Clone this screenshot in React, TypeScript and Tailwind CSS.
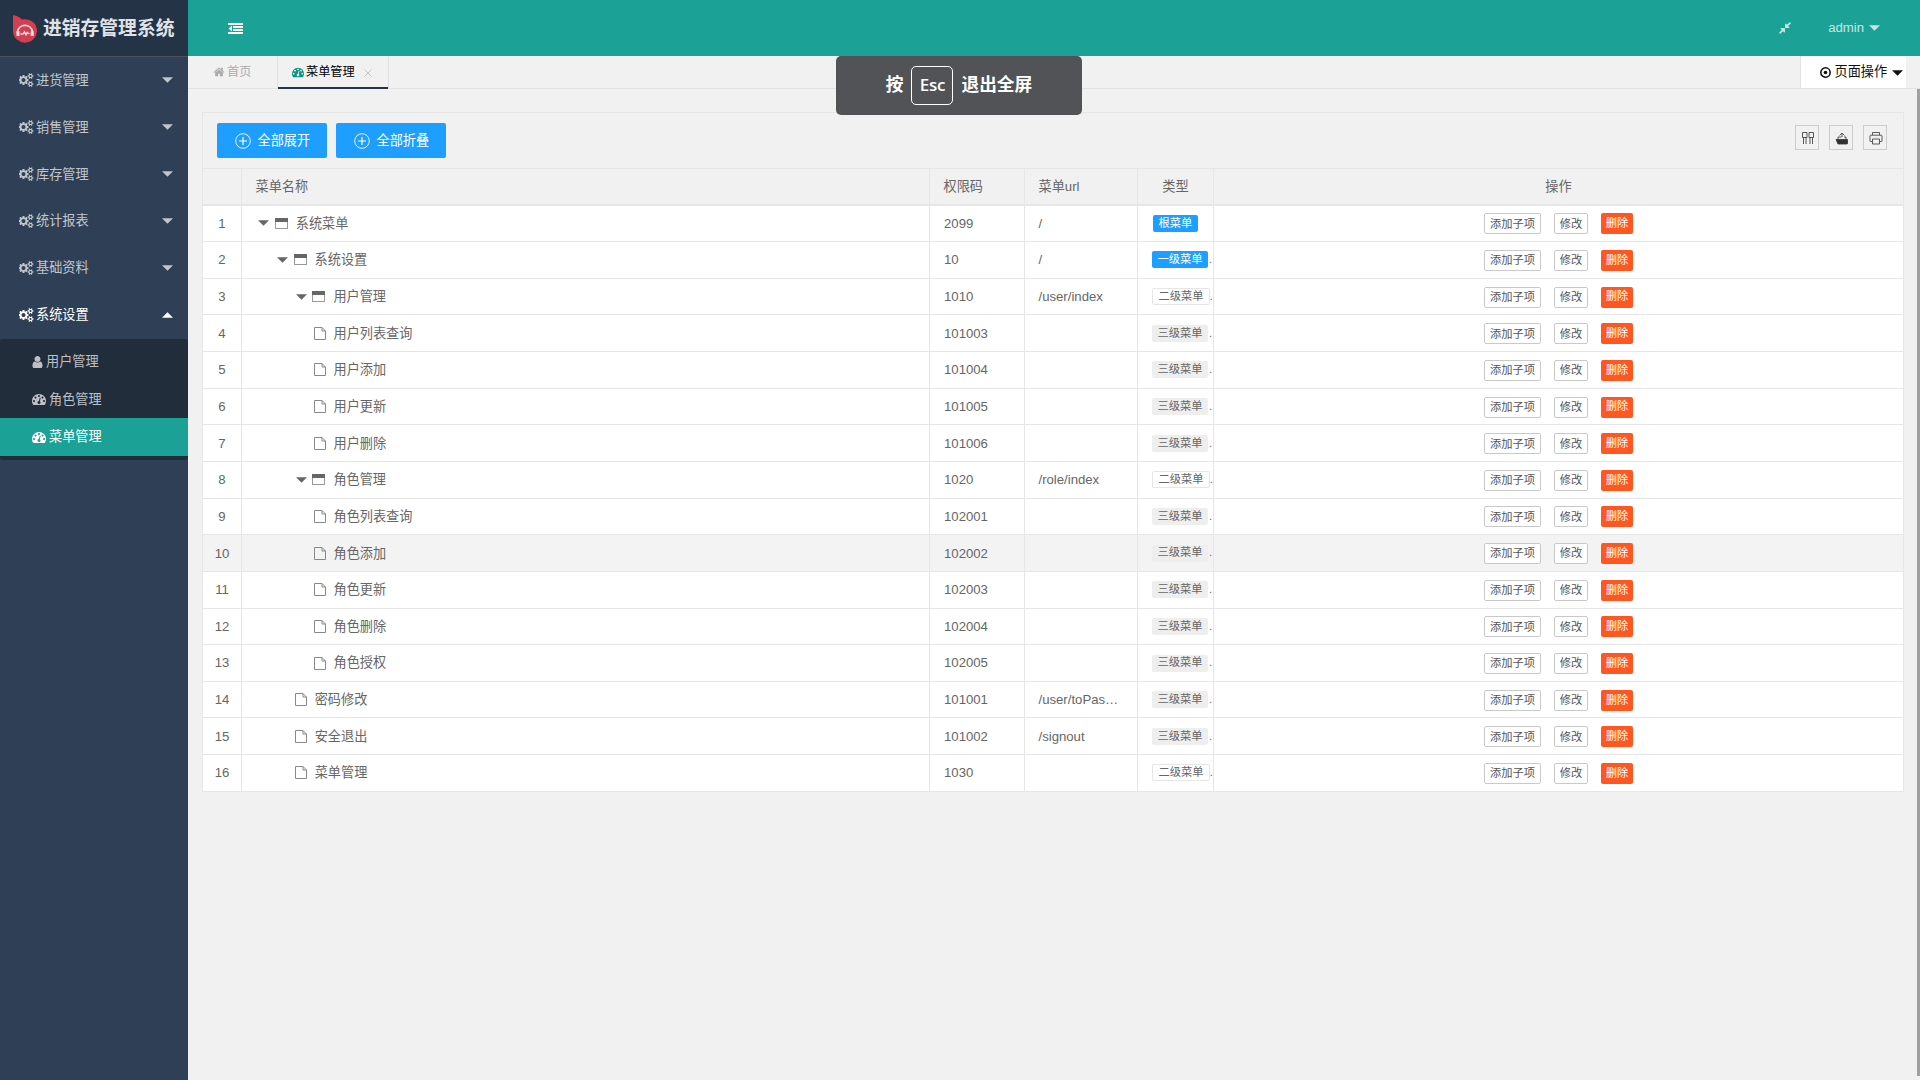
import { useState } from 'react';

interface MenuRow {
  name: string;
  depth: number;
  folder?: boolean;
  code: string;
  url?: string;
  level: 0 | 1 | 2 | 3;
}

const rows: MenuRow[] = [
  { name: '系统菜单', depth: 0, folder: true, code: '2099', url: '/', level: 0 },
  { name: '系统设置', depth: 1, folder: true, code: '10', url: '/', level: 1 },
  { name: '用户管理', depth: 2, folder: true, code: '1010', url: '/user/index', level: 2 },
  { name: '用户列表查询', depth: 3, code: '101003', level: 3 },
  { name: '用户添加', depth: 3, code: '101004', level: 3 },
  { name: '用户更新', depth: 3, code: '101005', level: 3 },
  { name: '用户删除', depth: 3, code: '101006', level: 3 },
  { name: '角色管理', depth: 2, folder: true, code: '1020', url: '/role/index', level: 2 },
  { name: '角色列表查询', depth: 3, code: '102001', level: 3 },
  { name: '角色添加', depth: 3, code: '102002', level: 3 },
  { name: '角色更新', depth: 3, code: '102003', level: 3 },
  { name: '角色删除', depth: 3, code: '102004', level: 3 },
  { name: '角色授权', depth: 3, code: '102005', level: 3 },
  { name: '密码修改', depth: 2, code: '101001', url: '/user/toPas…', level: 3 },
  { name: '安全退出', depth: 2, code: '101002', url: '/signout', level: 3 },
  { name: '菜单管理', depth: 2, code: '1030', level: 2 },
];

const levels = [
  { text: '根菜单', className: 'ml-[1px] bg-[#1e9fff] text-white px-[5.5px]' },
  { text: '一级菜单', className: 'bg-[#1e9fff] text-white px-[5.5px]' },
  { text: '二级菜单', className: 'border border-[#e6e6e6] bg-white px-[5.4px]' },
  { text: '三级菜单', className: 'bg-[#eeeeee] px-[5.5px]' },
];

const COGS =
  'M832 896q0-106-75-181t-181-75-181 75-75 181 75 181 181 75 181-75 75-181zm768 512q0-52-38-90t-90-38-90 38-38 90q0 53 37.5 90.5t90.5 37.5 90.5-37.5 37.5-90.5zm0-1024q0-52-38-90t-90-38-90 38-38 90q0 53 37.5 90.5t90.5 37.5 90.5-37.5 37.5-90.5zm-384 421v185q0 10-7 19.5t-16 10.5l-155 24q-11 35-32 76 34 48 90 115 7 11 7 20 0 12-7 19-23 30-82.5 89.5t-78.5 59.5q-11 0-21-7l-115-90q-37 19-77 31-11 108-23 155-7 24-30 24h-186q-11 0-20-7.5t-10-17.5l-23-153q-34-10-75-31l-118 89q-7 7-20 7-11 0-21-8-144-133-144-160 0-9 7-19 10-14 41-53t47-61q-23-44-35-82l-152-24q-10-1-17-9.5t-7-19.5v-185q0-10 7-19.5t16-10.5l155-24q11-35 32-76-34-48-90-115-7-11-7-20 0-12 7-20 22-30 82-89t79-59q11 0 21 7l115 90q34-18 77-32 11-108 23-154 7-24 30-24h186q11 0 20 7.5t10 17.5l23 153q34 10 75 31l118-89q8-7 20-7 11 0 21 8 144 133 144 160 0 8-7 19-12 16-42 54t-45 60q23 48 34 82l152 23q10 2 17 10.5t7 19.5zm640 533v140q0 16-149 31-12 27-30 52 51 113 51 138 0 4-4 7-122 71-124 71-8 0-46-47t-52-68q-20 2-30 2t-30-2q-14 21-52 68t-46 47q-2 0-124-71-4-3-4-7 0-25 51-138-18-25-30-52-149-15-149-31v-140q0-16 149-31 13-29 30-52-51-113-51-138 0-4 4-7 4-2 35-20t59-34 30-16q8 0 46 46.5t52 67.5q20-2 30-2t30 2q51-71 92-112l6-2q4 0 124 70 4 3 4 7 0 25-51 138 17 23 30 52 149 15 149 31zm0-1024v140q0 16-149 31-12 27-30 52 51 113 51 138 0 4-4 7-122 71-124 71-8 0-46-47t-52-68q-20 2-30 2t-30-2q-14 21-52 68t-46 47q-2 0-124-71-4-3-4-7 0-25 51-138-18-25-30-52-149-15-149-31v-140q0-16 149-31 13-29 30-52-51-113-51-138 0-4 4-7 4-2 35-20t59-34 30-16q8 0 46 46.5t52 67.5q20-2 30-2t30 2q51-71 92-112l6-2q4 0 124 70 4 3 4 7 0 25-51 138 17 23 30 52 149 15 149 31z';
const DASHBOARD =
  'M384 1152q0-53-37.5-90.5t-90.5-37.5-90.5 37.5-37.5 90.5 37.5 90.5 90.5 37.5 90.5-37.5 37.5-90.5zm192-448q0-53-37.5-90.5t-90.5-37.5-90.5 37.5-37.5 90.5 37.5 90.5 90.5 37.5 90.5-37.5 37.5-90.5zm428 481l101-382q6-26-7.5-48.5t-38.5-29.5-48 6.5-30 39.5l-101 382q-60 5-107 43.5t-63 98.5q-20 77 20 146t117 89 146-20 89-117q16-60-6-117t-72-91zm660-33q0-53-37.5-90.5t-90.5-37.5-90.5 37.5-37.5 90.5 37.5 90.5 90.5 37.5 90.5-37.5 37.5-90.5zm-640-640q0-53-37.5-90.5t-90.5-37.5-90.5 37.5-37.5 90.5 37.5 90.5 90.5 37.5 90.5-37.5 37.5-90.5zm448 192q0-53-37.5-90.5t-90.5-37.5-90.5 37.5-37.5 90.5 37.5 90.5 90.5 37.5 90.5-37.5 37.5-90.5zm320 448q0 261-141 483-19 29-54 29h-1402q-35 0-54-29-141-221-141-483 0-182 71-348t191-286 286-191 348-71 348 71 286 191 191 286 71 348z';
const HOME =
  'M1472 992v480q0 26-19 45t-45 19h-384v-384h-256v384h-384q-26 0-45-19t-19-45v-480q0-1 .5-3t.5-3l575-474 575 474q1 2 1 6zm223-69l-62 74q-8 9-21 11h-3q-13 0-21-7l-692-577-692 577q-12 8-24 7-13-2-21-11l-62-74q-8-10-7-23.5t11-21.5l719-599q32-26 76-26t76 26l244 204v-195q0-14 9-23t23-9h192q14 0 23 9t9 23v408l219 182q10 8 11 21.5t-7 23.5z';
const USER =
  'M1536 1399q0 109-62.5 187t-150.5 78h-854q-88 0-150.5-78t-62.5-187q0-85 8.5-160.5t31.5-152 58.5-131 94-89 134.5-34.5q131 128 313 128t313-128q76 0 134.5 34.5t94 89 58.5 131 31.5 152 8.5 160.5zm-256-887q0 159-112.5 271.5t-271.5 112.5-271.5-112.5-112.5-271.5 112.5-271.5 271.5-112.5 271.5 112.5 112.5 271.5z';
const COMPRESS =
  'M896 960v448q0 26-19 45t-45 19-45-19l-144-144-332 332q-10 10-23 10t-23-10l-114-114q-10-10-10-23t10-23l332-332-144-144q-19-19-19-45t19-45 45-19h448q26 0 45 19t19 45zm755-672q0 13-10 23l-332 332 144 144q19 19 19 45t-19 45-45 19h-448q-26 0-45-19t-19-45v-448q0-26 19-45t45-19 45 19l144 144 332-332q10-10 23-10t23 10l114 114q10 10 10 23z';

function Glyph({ d, box = '0 0 1792 1792', className }: { d: string; box?: string; className: string }) {
  return (
    <svg viewBox={box} fill="currentColor" className={`shrink-0 ${className}`}>
      <path d={d} />
    </svg>
  );
}

function Caret({ up = false, className = '' }: { up?: boolean; className?: string }) {
  return (
    <svg viewBox="0 0 12 6" fill="currentColor" className={`h-[6px] w-[11px] shrink-0 ${className}`}>
      <path d={up ? 'M0 6L6 0L12 6z' : 'M0 0L6 6L12 0z'} />
    </svg>
  );
}

function Logo() {
  return (
    <svg viewBox="0 0 24 28" className="mt-[1px] h-[28px] w-[24px] shrink-0">
      <path d="M0 0C4 .5 7 2.500 9 4.600A12 11.700 0 1 1 0 16z" fill="#d23f50" />
      <path d="M4.600 18.500V16.500A7.500 7.200 0 0 1 19.400 16.500V18.500" fill="none" stroke="#f6dfe4" strokeWidth="1.700" />
      <path d="M5 16.300V21M19.200 16.300V21" stroke="#f6dfe4" strokeWidth="3" />
      <path d="M7.500 19H10L11.500 17L13 19.800L14.300 17.500L16.500 19" fill="none" stroke="#f6dfe4" strokeWidth="1.500" />
    </svg>
  );
}

function Sidebar() {
  const groups = ['进货管理', '销售管理', '库存管理', '统计报表', '基础资料', '系统设置'];
  const children = [
    { text: '用户管理', icon: USER },
    { text: '角色管理', icon: DASHBOARD },
    { text: '菜单管理', icon: DASHBOARD },
  ];

  return (
    <aside className="flex w-[188px] shrink-0 flex-col bg-[#2f4056]">
      <div className="flex h-[57px] items-center gap-[6px] border-b border-[#4b5359] bg-[#243346] pl-[13px] text-[18.800px] font-bold text-[#dfe3e8]">
        <Logo />
        <h1 className="pt-[2px] whitespace-nowrap">进销存管理系统</h1>
      </div>
      <nav>
        {groups.map((text, i) => {
          const open = i === groups.length - 1;
          return (
            <div
              key={text}
              className={`flex h-[46.850px] items-center pr-[15px] pl-[18.500px] ${open ? 'text-white' : 'text-[#c1c6cc]'}`}
            >
              <Glyph d={COGS} box="0 0 1920 1792" className="mr-[2.500px] h-[14px] w-[15px]" />
              <span className="grow">{text}</span>
              <Caret up={open} />
            </div>
          );
        })}
        <div className="mt-[0.900px] rounded-[2px] bg-[#222d3c] pt-[4px] pb-[4px]">
          {children.map(({ text, icon }, i) => (
            <div
              key={text}
              className={`flex items-center pl-[32px] ${
                i === 2 ? 'h-[38px] bg-[#1ba195] text-white' : 'h-[37.500px] text-[#bdc0c5]'
              }`}
            >
              <Glyph
                d={icon}
                box={icon === USER ? '256 0 1280 1792' : '0 0 1792 1792'}
                className={icon === USER ? 'mr-[3px] h-[14px] w-[11px]' : 'mr-[3px] h-[14px] w-[14px]'}
              />
              {text}
            </div>
          ))}
        </div>
      </nav>
    </aside>
  );
}

function TopBar() {
  return (
    <header className="flex h-[56px] shrink-0 items-center bg-[#1ba195] pl-[40px] text-[#c5e7e3]">
      <svg viewBox="0 0 15 11" fill="#fff" className="h-[11px] w-[15px]">
        <path d="M0 0H15V2H0zM5 3H15V5H5zM5 6H15V8H5zM0 9H15V11H0zM4 2.600V8.400L.5 5.500z" />
      </svg>
      <div className="grow" />
      <Glyph d={COMPRESS} className="mr-[36px] h-[14px] w-[14px]" />
      <span className="mr-[5px]">admin</span>
      <Caret className="mr-[40px]" />
    </header>
  );
}

function TabBar() {
  return (
    <div className="flex h-[33px] shrink-0 border-b border-[#e2e2e2] text-[12.200px]">
      <div className="flex w-[90px] items-center border-r border-[#dfdfdf] pl-[25px] text-[#acacac]">
        <Glyph d={HOME} className="mr-[2px] h-[12px] w-[12px]" />
        首页
      </div>
      <div className="relative flex w-[111px] items-center border-r border-[#dfdfdf] pl-[14px] text-black">
        <Glyph d={DASHBOARD} className="mr-[2px] h-[12px] w-[12px] text-[#0d9488]" />
        菜单管理
        <svg viewBox="0 0 8 8" stroke="#c2c2c2" className="mt-[2px] ml-[9px] h-[8px] w-[8px]">
          <path d="M.5 .5L7.500 7.500M7.500 .5L.5 7.500" />
        </svg>
        <div className="absolute right-0 -bottom-px left-0 h-[2px] bg-[#243346]" />
      </div>
      <div className="grow" />
      <div className="mr-[14px] flex w-[106px] items-center border-l border-[#e2e2e2] bg-white pl-[19px] text-[13.160px] text-[#111]">
        <svg viewBox="0 0 12 12" className="mr-[3.500px] h-[11px] w-[11px]">
          <circle cx="6" cy="6" r="5.100" fill="none" stroke="currentColor" strokeWidth="1.700" />
          <circle cx="6" cy="6" r="2" fill="currentColor" />
        </svg>
        <span className="mr-[4.500px]">页面操作</span>
        <Caret className="mt-px" />
      </div>
    </div>
  );
}

function ToolIcon({ kind }: { kind: 'cols' | 'export' | 'print' }) {
  return (
    <div className="flex h-[25px] w-[24.500px] items-center justify-center border border-[#cccccc] text-[#333]">
      <svg viewBox="0 0 14 14" fill="none" stroke="currentColor" className="mt-px ml-[2px] h-[14px] w-[14px]" strokeWidth=".8">
        {kind === 'cols' && (
          <path d="M1.500 1.500H6V6.500H1.500zM8 1.500H12.500V6.500H8zM2.500 6.500V13M5 6.500V13M9 6.500V13M11.500 6.500V13" />
        )}
        {kind === 'export' && (
          <>
            <path d="M1 8.500H12.500V12.500Q12.500 13 12 13H3z" fill="currentColor" />
            <path d="M3 8.500V6H6.500M9 6H11V8.500M4.500 4.500L7 2L9.500 4.500M7 2.500V6" />
          </>
        )}
        {kind === 'print' && (
          <path d="M3.500 4V1.500H10.500V4M3 10.500H1.500Q1 10.500 1 10V5Q1 4.200 2 4.200H12Q13 4.200 13 5V10Q13 10.500 12.500 10.500H11M3.500 8H10.500V13H3.500z" />
        )}
      </svg>
    </div>
  );
}

function ToggleButton({ text }: { text: string }) {
  return (
    <button className="flex h-[35px] w-[110px] items-center rounded-[2px] bg-[#1e9fff] pt-px pl-[17.500px] text-white">
      <svg viewBox="0 0 16 16" fill="none" stroke="currentColor" className="mr-[7px] h-[16px] w-[16px]">
        <circle cx="8" cy="8" r="7.300" strokeWidth=".9" />
        <path d="M8 4V12M4 8H12" strokeWidth="1.200" />
      </svg>
      {text}
    </button>
  );
}

function NameCell({ row }: { row: MenuRow }) {
  return (
    <div className="flex items-center pl-[16.300px]">
      {/* one indent step per level */}
      <div style={{ width: row.depth * 18.8 }} className="shrink-0" />
      {row.folder ? (
        <>
          <Caret className="mr-[5.500px]" />
          <svg viewBox="0 0 13 11" className="mr-[8px] h-[11px] w-[13px]">
            <rect x=".5" y=".5" width="12" height="10" fill="#fff" stroke="#999" />
            <rect width="13" height="4" fill="#666" />
          </svg>
        </>
      ) : (
        <svg viewBox="0 0 12 13" fill="none" stroke="#888" className="mr-[8px] -ml-[1.200px] h-[13px] w-[12px]">
          <path d="M.5 .5H8L11.500 4V12.500H.5zM8 .5V4H11.500" />
        </svg>
      )}
      {row.name}
    </div>
  );
}

function MenuTable() {
  const [hovered, setHovered] = useState(9);
  const grid = 'grid grid-cols-[39px_688px_95px_113px_76px_1fr]';
  const cell = 'flex items-center border-r border-[#e6e6e6]';

  return (
    <div className="border-x border-[#e6e6e6] text-[#666]">
      <div className={`${grid} h-[36.500px] border-b-2 border-[#e6e6e6]`}>
        <div className={cell} />
        <div className={`${cell} pl-[13.500px]`}>菜单名称</div>
        <div className={`${cell} pl-[13.500px]`}>权限码</div>
        <div className={`${cell} pl-[13.500px]`}>菜单url</div>
        <div className={`${cell} justify-center`}>类型</div>
        <div className="flex items-center justify-center">操作</div>
      </div>
      {rows.map((row, i) => (
        <div
          key={row.code}
          onMouseEnter={() => setHovered(i)}
          className={`${grid} h-[36.650px] border-b border-[#e6e6e6] ${i === hovered ? 'bg-[#f3f3f3]' : 'bg-white'}`}
        >
          <div className={`${cell} justify-center`}>{i + 1}</div>
          <div className="flex border-r border-[#e6e6e6]">
            <NameCell row={row} />
          </div>
          <div className={`${cell} pl-[14px]`}>{row.code}</div>
          <div className={`${cell} pl-[13.500px]`}>{row.url}</div>
          <div className={`${cell} overflow-hidden pl-[14px] text-[11.280px]`}>
            <span
              className={`flex h-[17px] shrink-0 items-center rounded-[2px] whitespace-nowrap ${levels[row.level].className}`}
            >
              {levels[row.level].text}
            </span>
            {row.level > 0 && <span className={row.level === 2 ? '' : 'ml-px'}>.</span>}
          </div>
          <div className="flex items-center justify-center pt-px text-[11.280px]">
            <button className="mr-[13px] h-[21px] w-[57px] rounded-[2px] border border-[#c9c9c9] bg-white pt-px text-[#555]">
              添加子项
            </button>
            <button className="mr-[13px] h-[21px] w-[34px] rounded-[2px] border border-[#c9c9c9] bg-white pt-px text-[#555]">
              修改
            </button>
            <button className="h-[21px] w-[32px] rounded-[2px] bg-[#ff5722] text-white">删除</button>
          </div>
        </div>
      ))}
    </div>
  );
}

export default function App() {
  return (
    <div className="relative flex h-[1080px] w-[1920px] overflow-hidden bg-[#f1f1f1] font-['Liberation_Sans','Noto_Sans_CJK_SC',sans-serif] text-[13.160px] leading-none">
      <Sidebar />
      <div className="flex grow flex-col">
        <TopBar />
        <TabBar />
        <div className="flex grow">
          <main className="ml-[14px] w-[1702px] pt-[23px]">
            <div className="flex h-[57px] items-center gap-[9px] border-x border-y border-[#e6e6e6] pr-[16px] pb-px pl-[14px]">
              <ToggleButton text="全部展开" />
              <ToggleButton text="全部折叠" />
              <div className="grow" />
              <div className="flex gap-[9.500px] pb-[5px]">
                <ToolIcon kind="cols" />
                <ToolIcon kind="export" />
                <ToolIcon kind="print" />
              </div>
            </div>
            <MenuTable />
          </main>
          <div className="grow" />
          <div className="h-[987px] w-[3px] bg-[#9fa0a3]" />
        </div>
      </div>

      {/* fullscreen hint */}
      <div className="absolute top-[56px] left-[836px] flex h-[59px] w-[246px] items-center justify-center rounded-[5px] bg-[#515357] text-[17.700px] font-bold text-white">
        按
        <kbd className="mr-[8px] ml-[8px] flex h-[39px] w-[42px] items-center justify-center rounded-[5px] border border-white pb-[2px] font-['Open_Sans',sans-serif] text-[17px] font-semibold tracking-[-0.3px]">
          Esc
        </kbd>
        退出全屏
      </div>
    </div>
  );
}
